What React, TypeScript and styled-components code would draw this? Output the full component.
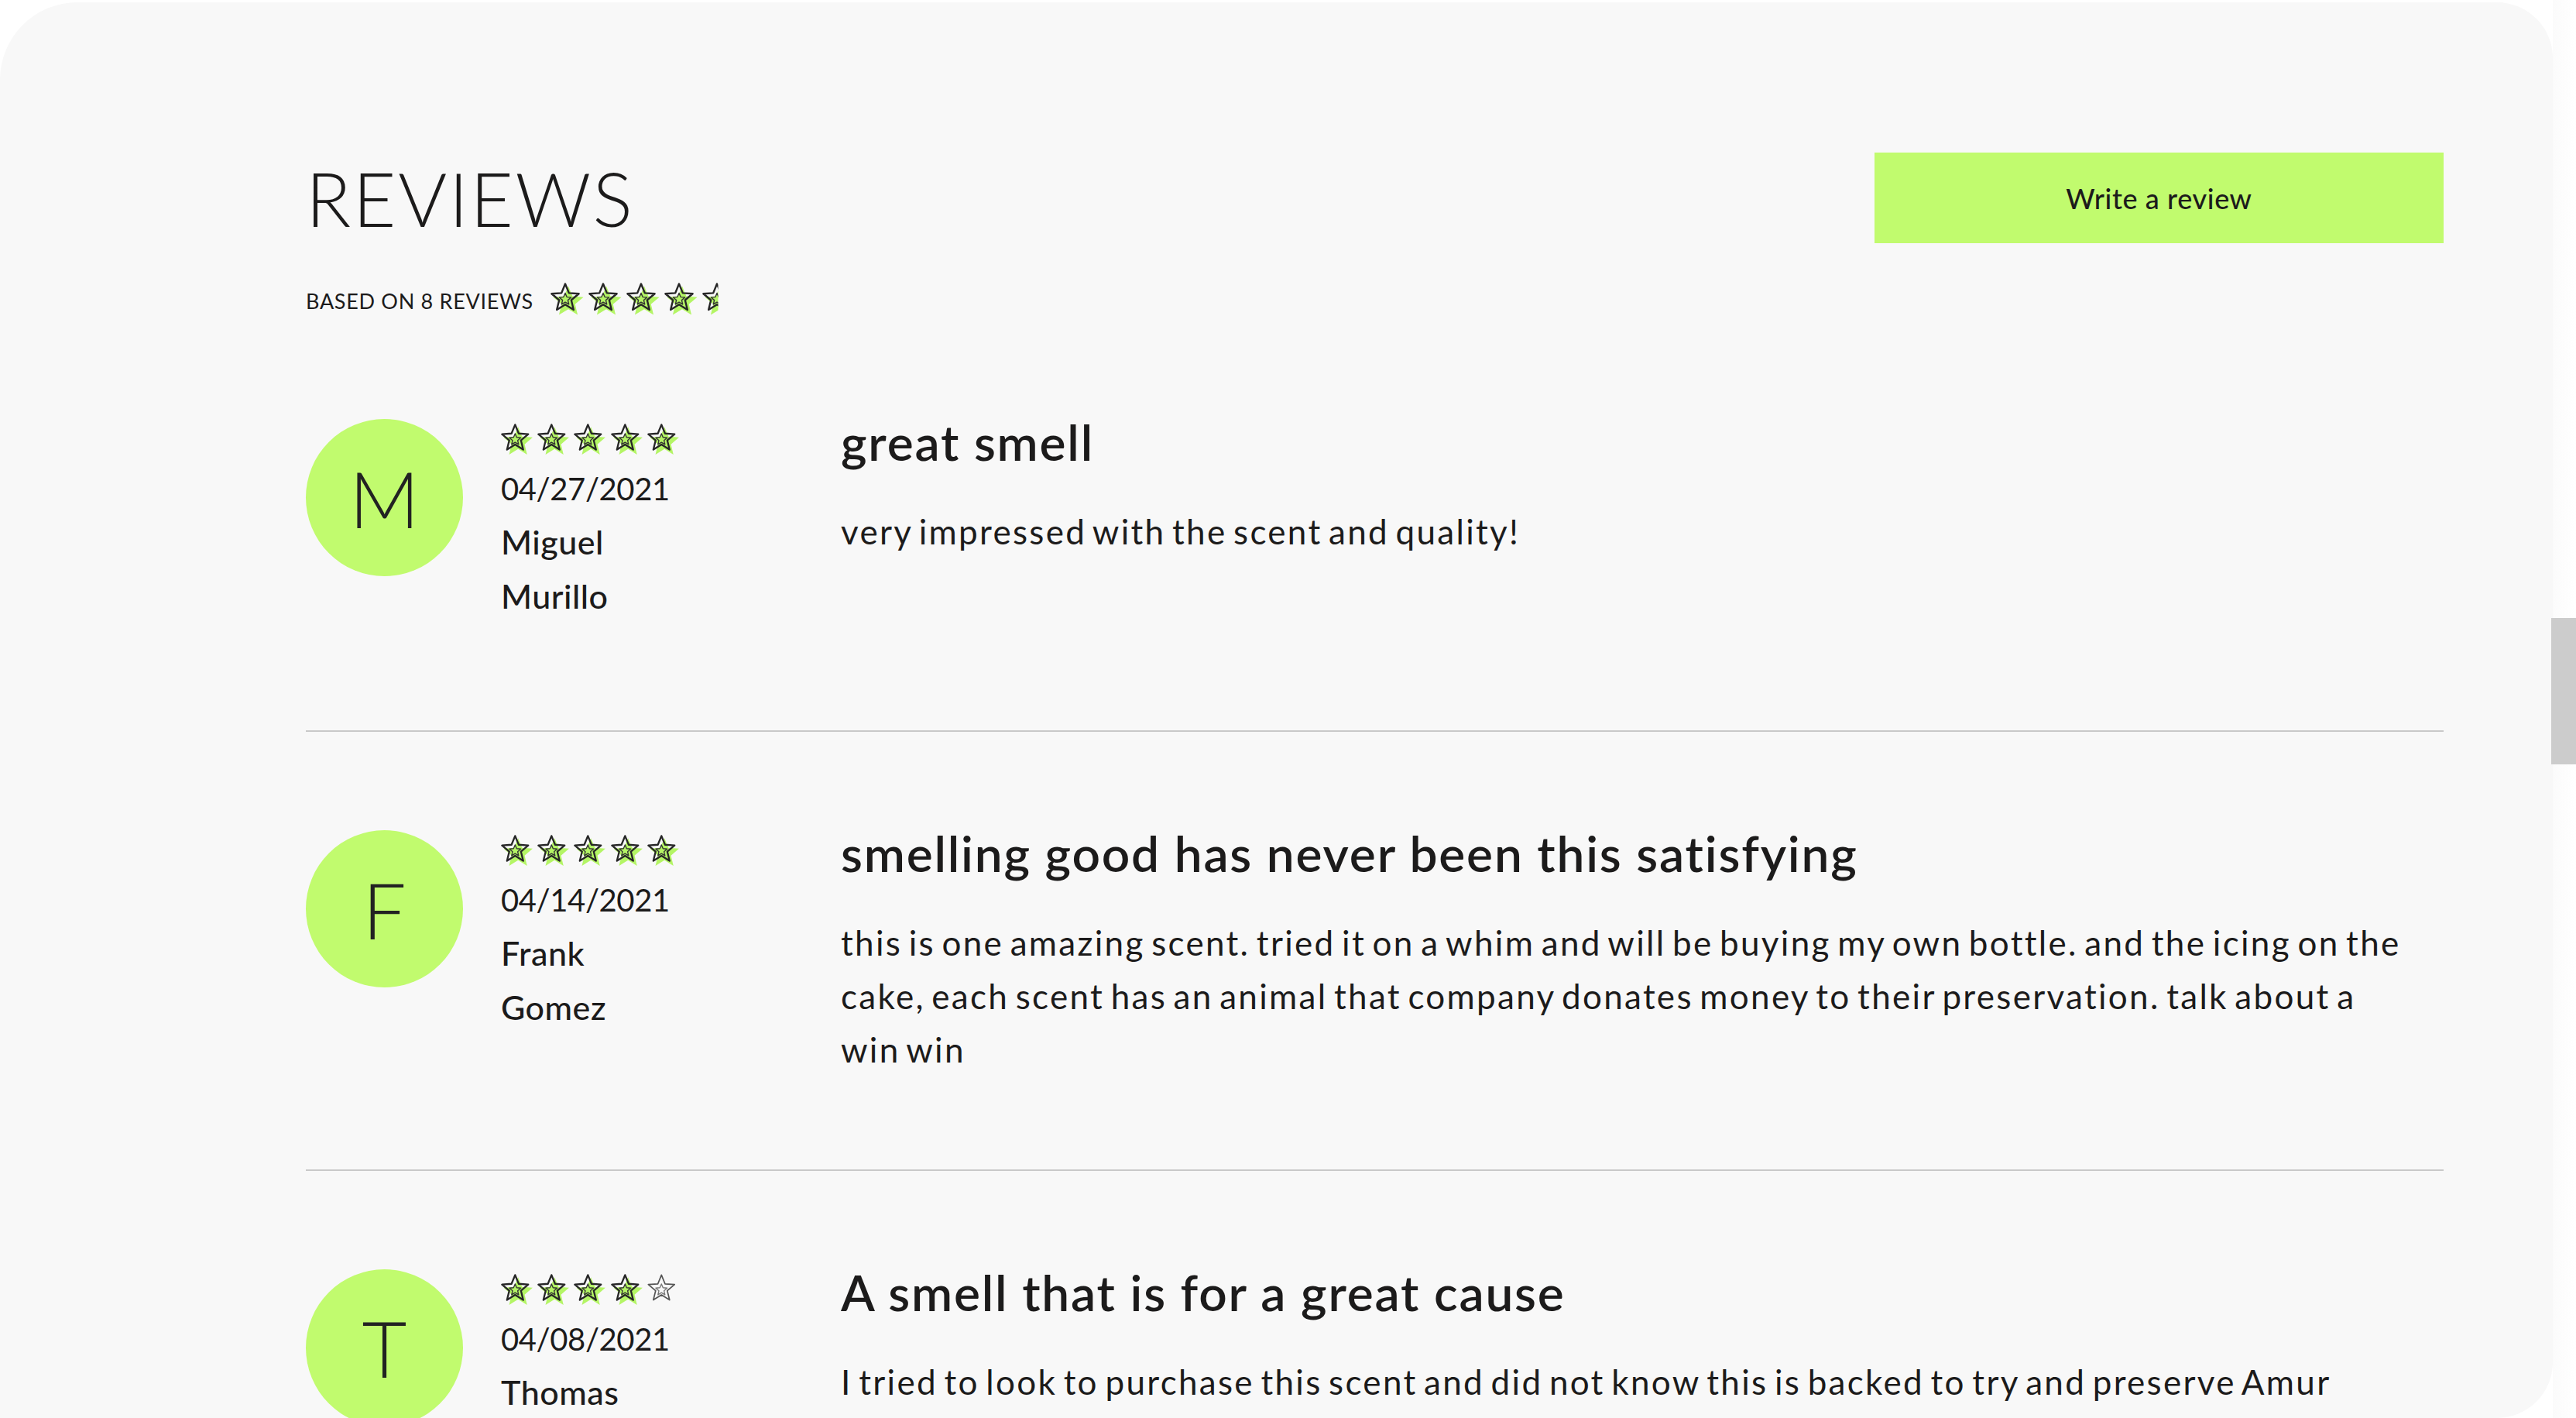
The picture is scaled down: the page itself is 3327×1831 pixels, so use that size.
import React from "react";
import styled, { createGlobalStyle } from "styled-components";

const GlobalStyle = createGlobalStyle`
  html, body {
    margin: 0;
    padding: 0;
    background: #ffffff;
    overflow: hidden;
  }
  body {
    font-family: "Lato", "Noto Sans", sans-serif;
    color: #1c1b1b;
  }
  * { box-sizing: border-box; }
`;

const GREEN = "#c1fb6e";
const STAR_GREEN = "#b4f565";

const Page = styled.div`
  display: flex;
  width: 3327px;
  height: 1831px;
  overflow: hidden;
  background: #ffffff;
`;

const Card = styled.main`
  flex: 1;
  margin-top: 3px;
  height: 1828px;
  background: #f8f8f8;
  border-radius: 100px 72px 72px 0;
  overflow: hidden;
  padding: 194px 141px 0 395px;
`;

const ScrollTrack = styled.div`
  width: 30px;
  flex: none;
  padding-top: 798px;
  background: linear-gradient(90deg, #fbfbfb, #ffffff);
`;

const ScrollThumb = styled.div`
  width: 32px;
  margin-left: -2px;
  height: 189px;
  background: #cccccc;
`;

const Header = styled.header`
  display: flex;
  align-items: center;
  justify-content: space-between;
`;

const Heading = styled.h1`
  margin: 0;
  font-family: "Lato", sans-serif;
  font-weight: 300;
  font-size: 96px;
  line-height: 1.2;
  letter-spacing: 2.6px;
  color: #1c1b1b;
`;

const WriteButton = styled.button`
  width: 735px;
  height: 117px;
  border: none;
  background: ${GREEN};
  font-family: "Lato", sans-serif;
  font-weight: 500;
  font-size: 36px;
  letter-spacing: 0.6px;
  color: #1c1b1b;
  cursor: pointer;
`;

const Summary = styled.div`
  display: flex;
  align-items: center;
  gap: 22px;
  margin-top: 51px;
`;

const SummaryLabel = styled.span`
  font-size: 27px;
  font-weight: 400;
  letter-spacing: 0.7px;
  line-height: 1.2;
`;

const StarRow = styled.div`
  display: flex;
  gap: 1px;
  height: 48px;
`;

const ReviewList = styled.section`
  margin-top: 1px;
`;

const ReviewItem = styled.article`
  display: flex;
  align-items: flex-start;
  padding: 127px 0 120px;
  border-bottom: 2px solid #c9c9c9;
`;

const Avatar = styled.div`
  flex: none;
  width: 203px;
  height: 203px;
  border-radius: 50%;
  background: ${GREEN};
  display: flex;
  align-items: center;
  justify-content: center;
  font-weight: 300;
  font-size: 100px;
  color: #222;
`;

const Meta = styled.div`
  flex: none;
  width: 235px;
  margin-left: 49px;
  padding-top: 5px;
  padding-bottom: 18px;
  display: flex;
  flex-direction: column;
`;

const DateText = styled.div`
  margin-top: 13px;
  font-size: 40px;
  line-height: 1.2;
  letter-spacing: -0.4px;
  font-weight: 400;
`;

const Name = styled.div`
  margin-top: 10px;
  font-size: 43px;
  line-height: 70px;
  letter-spacing: 0.5px;
  font-weight: 500;
`;

const Body = styled.div`
  flex: 1;
  margin-left: 204px;
  margin-top: -8px;
`;

const ReviewTitle = styled.h2`
  margin: 0;
  font-size: 64px;
  line-height: 1.2;
  letter-spacing: 1.8px;
  font-weight: 600;
`;

const ReviewText = styled.p`
  margin: 42px 0 0;
  max-width: 2027px;
  font-size: 44px;
  line-height: 69px;
  letter-spacing: 2.3px;
  word-spacing: -5px;
  font-weight: 400;
`;

function starPoints(cx: number, cy: number, R: number, r: number): string {
  const pts: string[] = [];
  for (let i = 0; i < 10; i++) {
    const ang = -Math.PI / 2 + (i * Math.PI) / 5;
    const rad = i % 2 === 0 ? R : r;
    pts.push(`${(cx + rad * Math.cos(ang)).toFixed(2)},${(cy + rad * Math.sin(ang)).toFixed(2)}`);
  }
  return pts.join(" ");
}

const OUTLINE = starPoints(19, 20, 18.5, 8.2);
const INNER = starPoints(19, 21.5, 8, 3.6);
const FILL = starPoints(23, 25, 20.5, 9.2);

type StarKind = "full" | "half" | "empty";

function Star({ kind, id }: { kind: StarKind; id: string }) {
  const clip = kind === "half" ? `url(#${id})` : undefined;
  return (
    <svg width="48" height="48" viewBox="0 0 48 48">
      {kind === "half" && (
        <defs>
          <clipPath id={id}>
            <rect x="0" y="0" width="20.5" height="48" />
          </clipPath>
        </defs>
      )}
      <g clipPath={clip}>
        {kind !== "empty" && <polygon points={FILL} fill={STAR_GREEN} />}
        <polygon
          points={OUTLINE}
          fill="none"
          stroke={kind === "empty" ? "#555" : "#262626"}
          strokeWidth={kind === "empty" ? 1.8 : 2.4}
          strokeLinejoin="round"
        />
        <polygon
          points={INNER}
          fill="none"
          stroke={kind === "empty" ? "#777" : "#333"}
          strokeWidth={1.4}
          strokeLinejoin="round"
        />
      </g>
    </svg>
  );
}

function Stars({ rating, idBase }: { rating: number; idBase: string }) {
  const kinds: StarKind[] = [0, 1, 2, 3, 4].map((i) =>
    rating >= i + 1 ? "full" : rating >= i + 0.5 ? "half" : "empty"
  );
  return (
    <StarRow>
      {kinds.map((k, i) => (
        <Star key={i} kind={k} id={`${idBase}-${i}`} />
      ))}
    </StarRow>
  );
}

type Review = {
  initial: string;
  rating: number;
  date: string;
  name: string;
  title: string;
  text: string;
};

const reviews: Review[] = [
  {
    initial: "M",
    rating: 5,
    date: "04/27/2021",
    name: "Miguel Murillo",
    title: "great smell",
    text: "very impressed with the scent and quality!",
  },
  {
    initial: "F",
    rating: 5,
    date: "04/14/2021",
    name: "Frank Gomez",
    title: "smelling good has never been this satisfying",
    text:
      "this is one amazing scent. tried it on a whim and will be buying my own bottle. and the icing on the cake, each scent has an animal that company donates money to their preservation. talk about a win win",
  },
  {
    initial: "T",
    rating: 4,
    date: "04/08/2021",
    name: "Thomas",
    title: "A smell that is for a great cause",
    text:
      "I tried to look to purchase this scent and did not know this is backed to try and preserve Amur",
  },
];

export default function App() {
  return (
    <>
      <GlobalStyle />
      <Page>
        <Card>
          <Header>
            <Heading>REVIEWS</Heading>
            <WriteButton>Write a review</WriteButton>
          </Header>
          <Summary>
            <SummaryLabel>BASED ON 8 REVIEWS</SummaryLabel>
            <Stars rating={4.5} idBase="summary" />
          </Summary>
          <ReviewList>
            {reviews.map((r, idx) => (
              <ReviewItem key={idx}>
                <Avatar>{r.initial}</Avatar>
                <Meta>
                  <Stars rating={r.rating} idBase={`r${idx}`} />
                  <DateText>{r.date}</DateText>
                  <Name>{r.name}</Name>
                </Meta>
                <Body>
                  <ReviewTitle>{r.title}</ReviewTitle>
                  <ReviewText>{r.text}</ReviewText>
                </Body>
              </ReviewItem>
            ))}
          </ReviewList>
        </Card>
        <ScrollTrack>
          <ScrollThumb />
        </ScrollTrack>
      </Page>
    </>
  );
}
